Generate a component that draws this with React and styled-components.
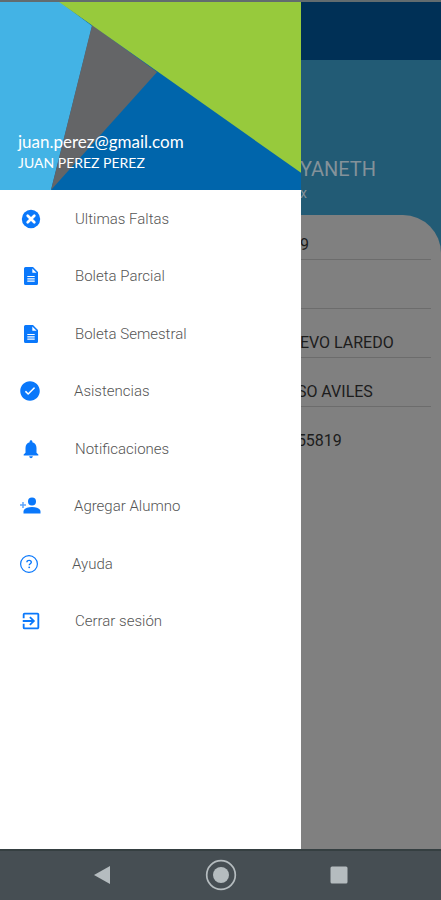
import React from "react";
import styled, { createGlobalStyle } from "styled-components";
import { MdNotifications, MdExitToApp } from "react-icons/md";
import { IoIosCheckmarkCircle } from "react-icons/io";

const GlobalStyle = createGlobalStyle`
  *, *::before, *::after { box-sizing: border-box; }
  body { margin: 0; font-family: Roboto, "Liberation Sans", sans-serif; }
`;

const Screen = styled.div`
  display: flex;
  flex-direction: column;
  min-height: 100vh;
  background: #808080;
`;

const Stage = styled.div`
  position: relative;
  flex: 1;
  display: flex;
  flex-direction: column;
  border-top: 2px solid #626c6f;
  overflow: hidden;
`;

const Page = styled.main`
  flex: 1;
  display: flex;
  flex-direction: column;
  background: #225b75;
`;

const AppBar = styled.header`
  height: 58px;
  background: #003056;
`;

const Profile = styled.section`
  height: 155px;
  padding: 96px 0 0 68%;
  color: #84929a;
`;

const StudentName = styled.h1`
  margin: 0;
  font-size: 20px;
  line-height: 26px;
  font-weight: 400;
`;

const StudentMail = styled.p`
  margin: 0;
  font-size: 14px;
  line-height: 22px;
`;

const Details = styled.section`
  flex: 1;
  padding: 0 10px 0 68%;
  border-top-right-radius: 38px;
  background: #808080;
`;

const Field = styled.p`
  display: flex;
  align-items: flex-end;
  height: ${({ $first }) => ($first ? 45 : 49)}px;
  margin: 0 0 0 ${({ $tucked }) => ($tucked ? -3 : 0)}px;
  padding-bottom: 4px;
  border-bottom: 1px solid ${({ $last }) => ($last ? "transparent" : "#6c6c6c")};
  color: #1c1c1c;
  font-size: 16px;
  line-height: 20px;
  white-space: nowrap;
`;

const Drawer = styled.aside`
  position: absolute;
  top: 0;
  bottom: 0;
  left: 0;
  width: 68.3%;
  display: flex;
  flex-direction: column;
  background: #fff;
`;

const Banner = styled.header`
  position: relative;
  height: 188px;
  display: flex;
  flex-direction: column;
  justify-content: flex-end;
  padding: 0 18px 17px;
  color: #fff;
  font-family: Lato, "Open Sans", sans-serif;
`;

const BannerArt = styled.svg`
  position: absolute;
  inset: 0;
  width: 100%;
  height: 100%;
`;

const Email = styled.span`
  position: relative;
  font-size: 17px;
  line-height: 22px;
`;

const UserName = styled.span`
  position: relative;
  font-size: 14px;
  line-height: 20px;
`;

const Menu = styled.nav`
  display: grid;
  grid-auto-rows: 1fr;
  min-height: 460px;
`;

const MenuLink = styled.a`
  display: flex;
  align-items: center;
  gap: 32px;
  padding: 0 18px;
  color: #555;
  font-size: 15px;
  font-weight: 300;
  line-height: 20px;
  text-decoration: none;
`;

const IconBox = styled.span`
  display: flex;
  justify-content: center;
  width: ${({ $width }) => $width}px;
  color: #0a78fb;
`;

const SystemBar = styled.footer`
  display: grid;
  grid-template-columns: 1fr 32px 1fr;
  align-items: center;
  height: 51px;
  padding-bottom: 2px;
  border-top: 2px solid #353f41;
  background: #464e53;
`;

const SystemButton = styled.button`
  display: flex;
  justify-self: center;
  padding: 0;
  border: 0;
  background: none;
  color: #b5bcbf;
`;

function CloseCircleIcon() {
  return (
    <svg width="20" height="20" viewBox="0 0 20 20" aria-hidden="true">
      <circle cx="10" cy="10" r="9.200" fill="currentColor" />
      <path d="M6.700 6.700l6.600 6.600M13.300 6.700l-6.600 6.600" stroke="#fff" strokeWidth="2.700" strokeLinecap="round" />
    </svg>
  );
}

function DocumentIcon() {
  return (
    <svg width="16" height="20" viewBox="0 0 16 20" aria-hidden="true">
      <path d="M2.500 1H10l5 5v11.500a1.500 1.500 0 0 1-1.500 1.500h-11A1.500 1.500 0 0 1 1 17.500v-15A1.500 1.500 0 0 1 2.500 1z" fill="currentColor" />
      <path d="M9.300 2.500v4.300h4.300z" fill="#fff" />
      <path d="M4.300 10.500h7.400M4.300 12.800h7.400M4.300 15.100h7.400" stroke="#fff" strokeWidth="1.200" />
    </svg>
  );
}

function PersonAddIcon() {
  return (
    <svg width="22" height="20" viewBox="0 0 22 20" fill="currentColor" aria-hidden="true">
      <circle cx="13" cy="5.500" r="4" />
      <path d="M4.500 17.500v-2c0-3 4-4.500 8.500-4.500s8.500 1.500 8.500 4.500v2z" />
      <path d="M4 6v6M1 9h6" stroke="currentColor" strokeWidth="1.500" opacity=".65" />
    </svg>
  );
}

function HelpIcon() {
  return (
    <svg width="20" height="20" viewBox="0 0 20 20" fill="none" stroke="currentColor" aria-hidden="true">
      <circle cx="10" cy="10" r="8.400" strokeWidth="1.200" />
      <path d="M7.900 8.300c0-1.200 1-1.900 2.200-1.900s2.200.7 2.200 1.800c0 1.500-2.100 1.500-2.100 3.100" strokeWidth="1.400" />
      <circle cx="10.200" cy="13.300" r=".9" fill="currentColor" stroke="none" />
    </svg>
  );
}

const menuItems = [
  { label: "Ultimas Faltas", icon: <CloseCircleIcon /> },
  { label: "Boleta Parcial", icon: <DocumentIcon /> },
  { label: "Boleta Semestral", icon: <DocumentIcon /> },
  { label: "Asistencias", icon: <IoIosCheckmarkCircle size={24} />, width: 24 },
  { label: "Notificaciones", icon: <MdNotifications size={22} /> },
  { label: "Agregar Alumno", icon: <PersonAddIcon />, width: 24 },
  { label: "Ayuda", icon: <HelpIcon />, width: 22 },
  { label: "Cerrar sesión", icon: <MdExitToApp size={22} /> },
];

const fields = [
  { value: "9" },
  { value: "" },
  { value: "EVO LAREDO" },
  { value: "SO AVILES", tucked: true },
  { value: "55819", tucked: true },
];

export default function App() {
  return (
    <>
      <GlobalStyle />
      <Screen>
        <Stage>
          <Page>
            <AppBar />
            <Profile>
              <StudentName>YANETH</StudentName>
              <StudentMail>x</StudentMail>
            </Profile>
            <Details>
              {fields.map(({ value, tucked }, i) => (
                <Field key={i} $first={i === 0} $last={i === fields.length - 1} $tucked={tucked}>
                  {value}
                </Field>
              ))}
            </Details>
          </Page>
          <Drawer>
            <Banner>
              <BannerArt viewBox="0 0 301 188" preserveAspectRatio="none" aria-hidden="true">
                <rect width="301" height="188" fill="#0065ab" />
                <path d="M0 0H60L92 24L51 188H0z" fill="#43b3e5" />
                <path d="M92 23L157 70L51 188z" fill="#646567" />
                <path d="M59 0H301V171z" fill="#97ca3c" />
              </BannerArt>
              <Email>juan.perez@gmail.com</Email>
              <UserName>JUAN PEREZ PEREZ</UserName>
            </Banner>
            <Menu>
              {menuItems.map(({ label, icon, width = 25 }) => (
                <MenuLink key={label} href="#">
                  <IconBox $width={width}>{icon}</IconBox>
                  {label}
                </MenuLink>
              ))}
            </Menu>
          </Drawer>
        </Stage>
        <SystemBar>
          <SystemButton aria-label="Back">
            <svg width="16" height="18" viewBox="0 0 16 18" fill="currentColor">
              <path d="M0 9L16 0V18z" />
            </svg>
          </SystemButton>
          <SystemButton aria-label="Home">
            <svg width="32" height="32" viewBox="0 0 32 32">
              <circle cx="16" cy="16" r="14.300" fill="none" stroke="currentColor" strokeWidth="1.700" />
              <circle cx="16" cy="16" r="8" fill="currentColor" />
            </svg>
          </SystemButton>
          <SystemButton aria-label="Recent apps">
            <svg width="18" height="18" viewBox="0 0 18 18" fill="currentColor">
              <rect x="0.500" y="0.500" width="17" height="17" rx="1.500" />
            </svg>
          </SystemButton>
        </SystemBar>
      </Screen>
    </>
  );
}
